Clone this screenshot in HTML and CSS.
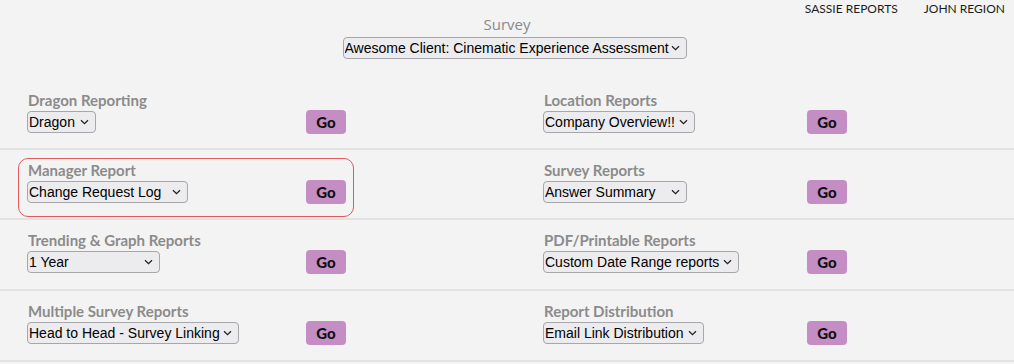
FILE: index.html
```html
<!DOCTYPE html>
<html lang="en">
<head>
<meta charset="utf-8">
<title>Reports</title>
<link rel="stylesheet" href="styles.css">
</head>
<body>
<header class="top">
  <div class="top-side"></div>
  <div class="survey">
    <label class="survey-label" for="survey">Survey</label>
    <select id="survey" class="sel sel-survey">
      <option>Awesome Client: Cinematic Experience Assessment</option>
    </select>
  </div>
  <nav class="top-nav">
    <a href="#">SASSIE REPORTS</a>
    <a href="#">JOHN REGION</a>
  </nav>
</header>

<main class="reports">
  <section class="row">
    <div class="cell cell-left">
      <div class="cell-label">Dragon Reporting</div>
      <div class="cell-controls">
        <select class="sel w-dragon"><option>Dragon</option></select>
        <button class="go">Go</button>
      </div>
    </div>
    <div class="cell cell-right">
      <div class="cell-label">Location Reports</div>
      <div class="cell-controls">
        <select class="sel w-company"><option>Company Overview!!</option></select>
        <button class="go">Go</button>
      </div>
    </div>
  </section>

  <section class="row">
    <div class="cell cell-left highlighted">
      <div class="cell-label">Manager Report</div>
      <div class="cell-controls">
        <select class="sel w-change"><option>Change Request Log</option></select>
        <button class="go">Go</button>
      </div>
    </div>
    <div class="cell cell-right">
      <div class="cell-label">Survey Reports</div>
      <div class="cell-controls">
        <select class="sel w-answer"><option>Answer Summary</option></select>
        <button class="go">Go</button>
      </div>
    </div>
  </section>

  <section class="row">
    <div class="cell cell-left">
      <div class="cell-label">Trending &amp; Graph Reports</div>
      <div class="cell-controls">
        <select class="sel w-year"><option>1 Year</option></select>
        <button class="go">Go</button>
      </div>
    </div>
    <div class="cell cell-right">
      <div class="cell-label">PDF/Printable Reports</div>
      <div class="cell-controls">
        <select class="sel w-custom"><option>Custom Date Range reports</option></select>
        <button class="go">Go</button>
      </div>
    </div>
  </section>

  <section class="row">
    <div class="cell cell-left">
      <div class="cell-label">Multiple Survey Reports</div>
      <div class="cell-controls">
        <select class="sel w-head"><option>Head to Head - Survey Linking</option></select>
        <button class="go">Go</button>
      </div>
    </div>
    <div class="cell cell-right">
      <div class="cell-label">Report Distribution</div>
      <div class="cell-controls">
        <select class="sel w-email"><option>Email Link Distribution</option></select>
        <button class="go">Go</button>
      </div>
    </div>
  </section>
</main>
</body>
</html>
```

FILE: styles.css
```css
* { box-sizing: border-box; }

html, body {
  margin: 0;
  padding: 0;
  background: #f3f3f3;
}

body {
  width: 1014px;
  height: 364px;
  overflow: hidden;
  font-family: "Lato", "Open Sans", sans-serif;
  color: #222;
}

/* header */
.top {
  display: grid;
  grid-template-columns: 1fr auto 1fr;
  height: 80px;
}

.survey {
  display: flex;
  flex-direction: column;
  align-items: center;
  padding-top: 14px;
}

.survey-label {
  font-family: "Open Sans", "Lato", sans-serif;
  font-size: 15px;
  line-height: 20px;
  color: #8a8a8a;
}

.top-nav {
  display: flex;
  justify-content: flex-end;
  align-items: flex-start;
  gap: 26px;
  padding: 1px 9px 0 0;
}

.top-nav a {
  font-family: "Lato", sans-serif;
  font-size: 12px;
  line-height: 16px;
  color: #1c1c1c;
  text-decoration: none;
}

/* selects */
.sel {
  -webkit-appearance: none;
  appearance: none;
  height: 22px;
  margin: 0;
  padding: 0 14px 0 1px;
  font-family: "Liberation Sans", Arial, sans-serif;
  font-size: 14px;
  color: #000;
  background-color: #ececef;
  background-image: url("data:image/svg+xml,%3Csvg xmlns='http://www.w3.org/2000/svg' width='9' height='6' viewBox='0 0 9 6'%3E%3Cpath d='M1 1.2 L4.5 4.6 L8 1.2' fill='none' stroke='%23222' stroke-width='1.3'/%3E%3C/svg%3E");
  background-repeat: no-repeat;
  background-position: right 6px center;
  border: 1px solid #a6a6ab;
  border-radius: 4px;
}

.sel-survey { width: 344px; margin-top: 3px; margin-left: 15px; }
.w-dragon  { width: 69px; }
.w-change  { width: 161px; }
.w-year    { width: 133px; }
.w-head    { width: 212px; }
.w-company { width: 152px; }
.w-answer  { width: 144px; }
.w-custom  { width: 196px; }
.w-email   { width: 161px; }

/* report rows */
.row {
  display: grid;
  grid-template-columns: 516px 1fr;
  height: 70px;
  border-bottom: 2px solid #e2e2e2;
}

.row:nth-child(n+3) { height: 71px; }

.cell {
  position: relative;
  padding-top: 11px;
}

.cell-left  { padding-left: 27px; }
.cell-right { padding-left: 27px; }

.cell-label {
  padding-left: 1px;
  margin-bottom: 1px;
  font-family: "Lato", sans-serif;
  font-weight: 700;
  font-size: 15px;
  line-height: 18px;
  color: #8b8b8b;
}

.cell-controls {
  display: grid;
  align-items: center;
}

.cell-left .cell-controls  { grid-template-columns: 279px 40px; }
.cell-right .cell-controls { grid-template-columns: 264px 40px; }

.go {
  width: 40px;
  height: 24px;
  padding: 0;
  border: none;
  border-radius: 4px;
  background: #c48ec5;
  font-family: "Lato", sans-serif;
  font-weight: 900;
  font-size: 15px;
  color: #111;
  cursor: pointer;
}

.highlighted::after {
  content: "";
  position: absolute;
  left: 18px;
  top: 8px;
  width: 334px;
  height: 57px;
  border: 1.5px solid #e05a5a;
  border-radius: 10px;
  pointer-events: none;
}
```
